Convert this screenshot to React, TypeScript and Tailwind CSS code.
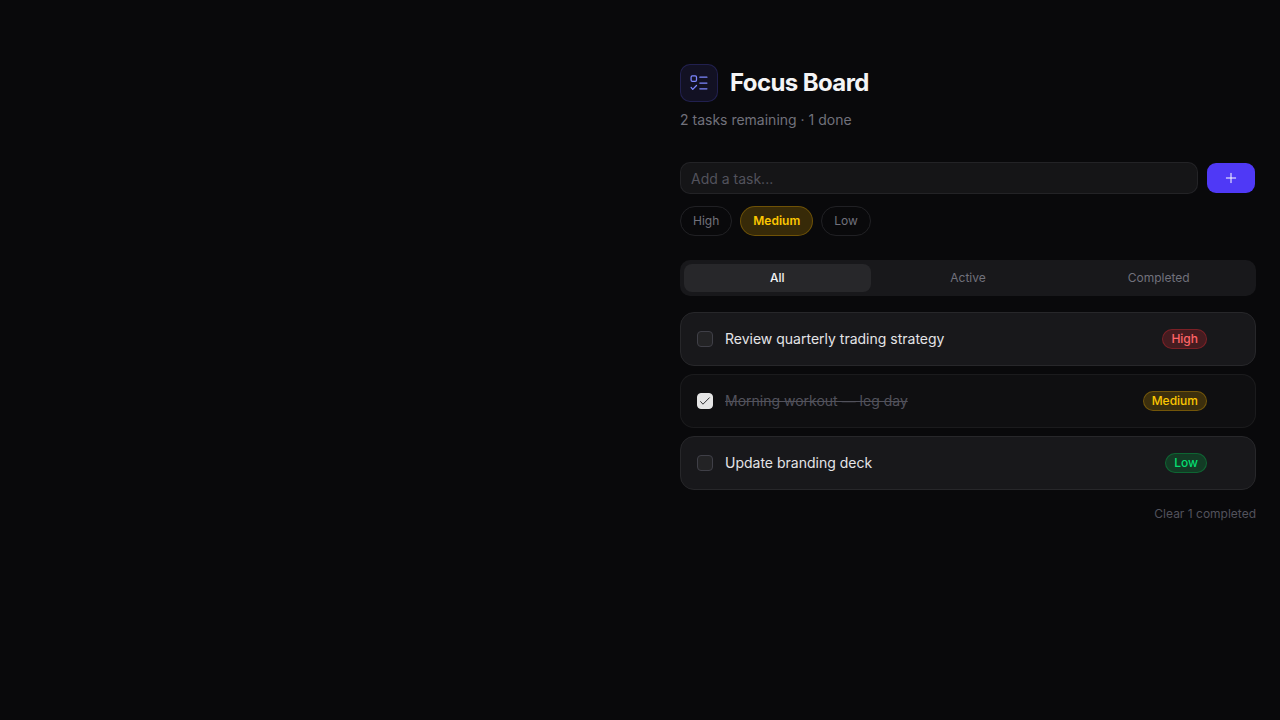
import { useState } from 'react';
import type { FormEvent } from 'react';
import { X } from 'lucide-react';
import clsx from 'clsx';

type Priority = 'High' | 'Medium' | 'Low';
type Filter = 'All' | 'Active' | 'Completed';

interface Task {
  id: number;
  title: string;
  priority: Priority;
  done: boolean;
}

const PRIORITIES: Priority[] = ['High', 'Medium', 'Low'];
const FILTERS: Filter[] = ['All', 'Active', 'Completed'];

const priorityClasses: Record<Priority, string> = {
  High: 'border-red-500/30 bg-red-500/20 text-red-400',
  Medium: 'border-yellow-500/30 bg-yellow-500/20 text-yellow-400',
  Low: 'border-green-500/30 bg-green-500/20 text-green-400',
};

const initialTasks: Task[] = [
  { id: 1, title: 'Review quarterly trading strategy', priority: 'High', done: false },
  { id: 2, title: 'Morning workout — leg day', priority: 'Medium', done: true },
  { id: 3, title: 'Update branding deck', priority: 'Low', done: false },
];

// 24px grid, 1.5 stroke
const iconPaths = {
  todo: 'M4 3.5H7.5A1.5 1.5 0 0 1 9 5V8.5A1.5 1.5 0 0 1 7.5 10H4A1.5 1.5 0 0 1 2.5 8.5V5A1.5 1.5 0 0 1 4 3.5ZM2.5 17.3L4.5 19.7L9 15M13 5H21.5M13 12H21.5M13 19H21.5',
  plus: 'M12 5V19M19 12H5',
  tick: 'M4.5 13L8.5 17.5L19.5 6.5',
};

function Icon({ name, className }: { name: keyof typeof iconPaths; className?: string }) {
  return (
    <svg
      viewBox="0 0 24 24"
      fill="none"
      stroke="currentColor"
      strokeWidth={1.5}
      strokeLinecap="round"
      strokeLinejoin="round"
      aria-hidden="true"
      className={className}
    >
      <path d={iconPaths[name]} />
    </svg>
  );
}

function TaskCard({
  task,
  onToggle,
  onRemove,
}: {
  task: Task;
  onToggle: () => void;
  onRemove: () => void;
}) {
  const inputId = `task-${task.id}`;
  return (
    <li
      className={clsx(
        'group flex items-center gap-3 rounded-[14px] border p-4',
        task.done
          ? 'border-zinc-800/50 bg-zinc-900/40'
          : 'border-zinc-800 bg-zinc-900',
      )}
    >
      <span className="grid size-4 shrink-0">
        <input
          id={inputId}
          type="checkbox"
          checked={task.done}
          onChange={onToggle}
          className="col-start-1 row-start-1 size-4 appearance-none rounded-[4px] border border-zinc-700 bg-[#232325] checked:border-neutral-200 checked:bg-neutral-200"
        />
        {task.done && (
          <Icon
            name="tick"
            className="pointer-events-none col-start-1 row-start-1 size-3.5 place-self-center text-zinc-900"
          />
        )}
      </span>
      <label
        htmlFor={inputId}
        className={clsx(
          'min-w-0 flex-1 text-sm',
          task.done ? 'text-zinc-600 line-through' : 'text-zinc-200',
        )}
      >
        {task.title}
      </label>
      <span
        className={clsx(
          'flex h-5 items-center rounded-full border px-2 text-xs font-medium',
          priorityClasses[task.priority],
        )}
      >
        {task.priority}
      </span>
      <button
        type="button"
        onClick={onRemove}
        aria-label={`Delete ${task.title}`}
        className="flex size-5 items-center justify-center text-zinc-500 opacity-0 group-hover:opacity-100 focus:opacity-100"
      >
        <X className="size-3.5" />
      </button>
    </li>
  );
}

export default function App() {
  const [tasks, setTasks] = useState(initialTasks);
  const [title, setTitle] = useState('');
  const [priority, setPriority] = useState<Priority>('Medium');
  const [filter, setFilter] = useState<Filter>('All');

  const doneCount = tasks.filter((t) => t.done).length;
  const visible = tasks.filter(
    (t) => filter === 'All' || (filter === 'Completed') === t.done,
  );

  const addTask = (e: FormEvent) => {
    e.preventDefault();
    if (!title.trim()) return;
    setTasks([{ id: Date.now(), title: title.trim(), priority, done: false }, ...tasks]);
    setTitle('');
  };

  return (
    <div className="flex min-h-screen justify-end bg-zinc-950 px-6 py-16 font-[Inter,sans-serif] text-zinc-100">
      <main className="w-full max-w-xl">
        <header className="mb-8">
          <div className="mb-2 flex items-center gap-3">
            <div className="rounded-[10px] border border-indigo-500/20 bg-indigo-500/10 p-2">
              <Icon name="todo" className="size-5 text-indigo-400" />
            </div>
            <h1 className="text-2xl font-bold tracking-tight">Focus Board</h1>
          </div>
          <p className="text-sm text-zinc-500">
            {tasks.length - doneCount} tasks remaining · {doneCount} done
          </p>
        </header>

        <form onSubmit={addTask} className="mb-6">
          <div className="mb-3 flex gap-2">
            <input
              value={title}
              onChange={(e) => setTitle(e.target.value)}
              aria-label="Add a task"
              placeholder="Add a task..."
              className="h-8 min-w-0 flex-1 rounded-[10px] border border-zinc-800/80 bg-[#151517] px-2.5 text-sm outline-none placeholder:text-zinc-600"
            />
            <button
              type="submit"
              aria-label="Add"
              className="flex h-8 items-center rounded-[10px] border border-transparent bg-indigo-600 bg-clip-padding px-4 text-white"
            >
              <Icon name="plus" className="size-4" />
            </button>
          </div>
          <div className="flex gap-2">
            {PRIORITIES.map((p) => (
              <button
                key={p}
                type="button"
                aria-pressed={p === priority}
                onClick={() => setPriority(p)}
                className={clsx(
                  'rounded-full border px-3 py-1.5 text-xs',
                  p === priority
                    ? ['font-semibold', priorityClasses[p]]
                    : 'border-zinc-800/80 text-zinc-500',
                )}
              >
                {p}
              </button>
            ))}
          </div>
        </form>

        <div className="mb-4 flex gap-1 rounded-[10px] bg-zinc-900 p-1">
          {FILTERS.map((f) => (
            <button
              key={f}
              type="button"
              aria-pressed={f === filter}
              onClick={() => setFilter(f)}
              className={clsx(
                'flex-1 rounded-lg py-1.5 text-xs',
                f === filter ? 'bg-zinc-800 font-medium text-zinc-100' : 'text-zinc-500',
              )}
            >
              {f}
            </button>
          ))}
        </div>

        <ul className="flex flex-col gap-2">
          {visible.map((task) => (
            <TaskCard
              key={task.id}
              task={task}
              onToggle={() =>
                setTasks(tasks.map((t) => (t.id === task.id ? { ...t, done: !t.done } : t)))
              }
              onRemove={() => setTasks(tasks.filter((t) => t.id !== task.id))}
            />
          ))}
        </ul>

        {doneCount > 0 && (
          <div className="mt-4 flex justify-end">
            <button
              type="button"
              onClick={() => setTasks(tasks.filter((t) => !t.done))}
              className="text-xs text-zinc-600"
            >
              Clear {doneCount} completed
            </button>
          </div>
        )}
      </main>
    </div>
  );
}
